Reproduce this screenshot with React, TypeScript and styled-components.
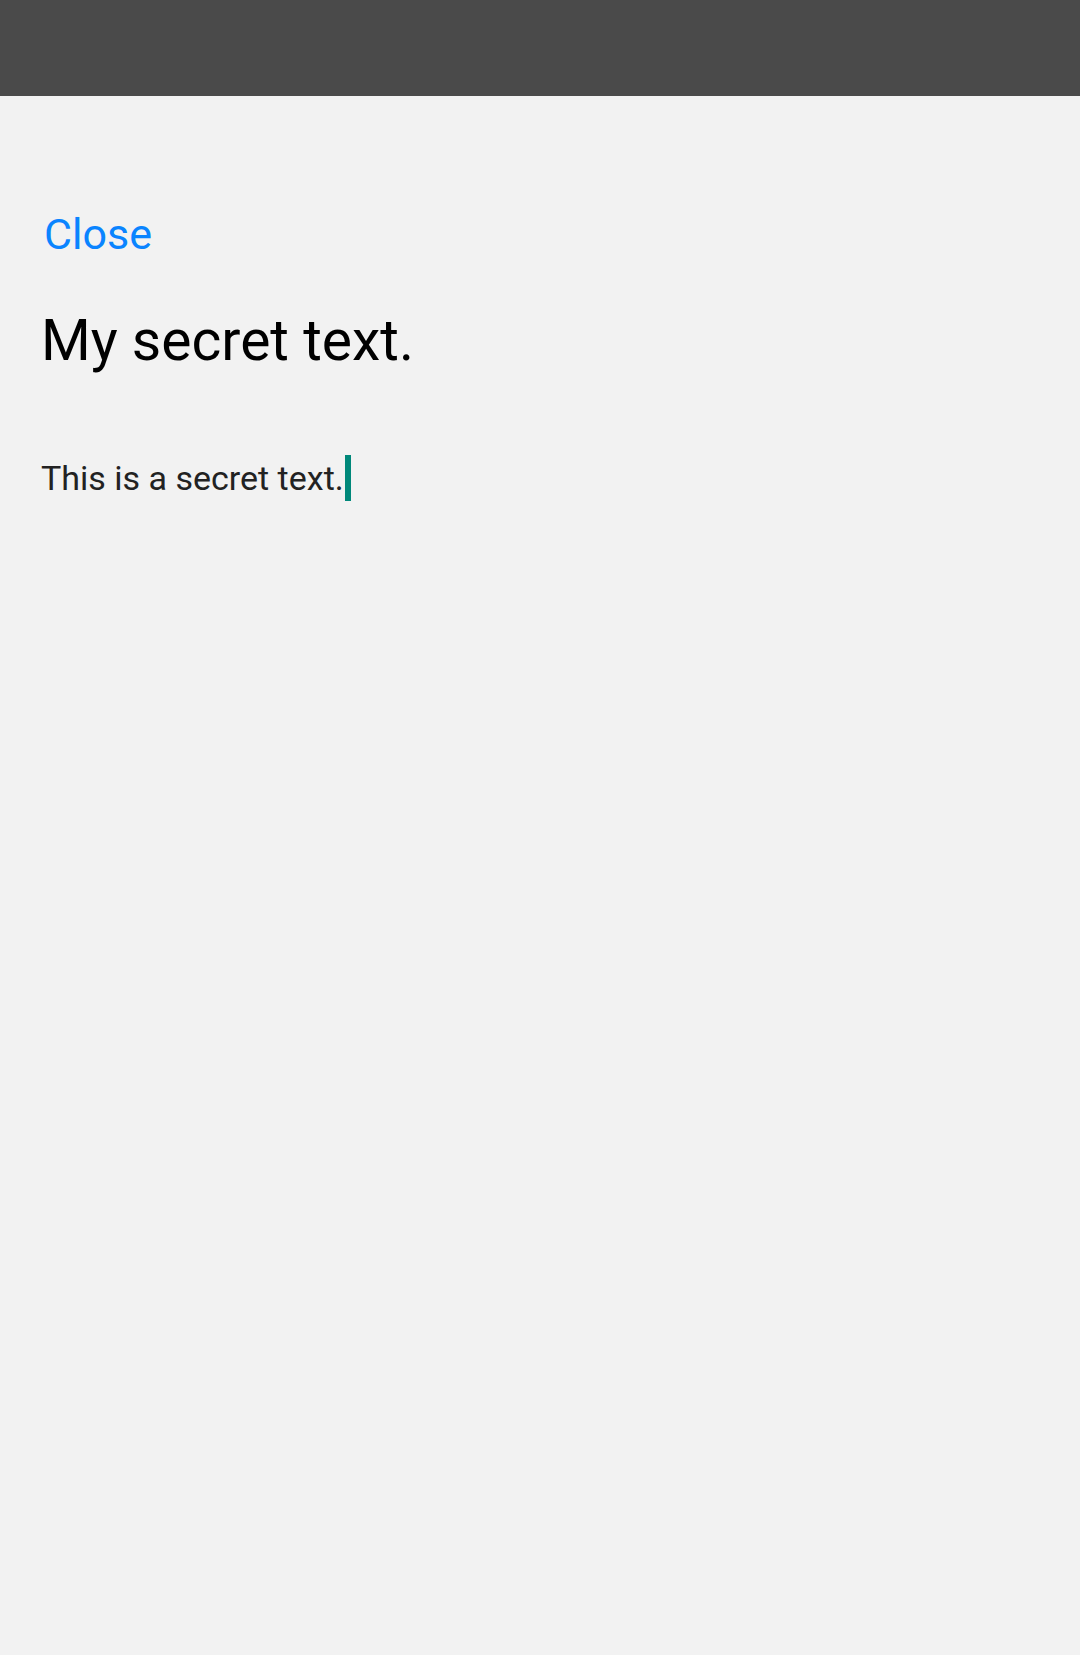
import styled, { createGlobalStyle } from 'styled-components'

const GlobalStyle = createGlobalStyle`
  html, body {
    margin: 0;
    padding: 0;
    background: #f2f2f2;
  }
  body {
    font-family: Roboto, "Noto Sans", sans-serif;
  }
`

const Page = styled.div`
  min-height: 1655px;
  background: #f2f2f2;
  display: flex;
  flex-direction: column;
`

const TopBar = styled.div`
  height: 96px;
  background: #4a4a4a;
`

const Content = styled.div`
  padding: 112px 41px 0;
  display: flex;
  flex-direction: column;
  align-items: flex-start;
`

const CloseButton = styled.button`
  border: 0;
  background: none;
  padding: 0 0 0 3px;
  font-family: Roboto, sans-serif;
  font-size: 43px;
  line-height: 52px;
  color: #0a84ff;
  cursor: pointer;
`

const Title = styled.h1`
  margin: 46px 0 0;
  font-size: 57px;
  font-weight: 400;
  line-height: 70px;
  color: #000;
`

const Body = styled.div`
  margin-top: 79px;
  font-size: 34px;
  line-height: 46px;
  color: #222;
  display: flex;
  align-items: center;
`

const Caret = styled.span`
  display: inline-block;
  width: 6px;
  height: 46px;
  background: #00887a;
  margin-left: 1px;
`

export default function App() {
  return (
    <>
      <GlobalStyle />
      <Page>
        <TopBar />
        <Content>
          <CloseButton>Close</CloseButton>
          <Title>My secret text.</Title>
          <Body>
            This is a secret text.
            <Caret />
          </Body>
        </Content>
      </Page>
    </>
  )
}
